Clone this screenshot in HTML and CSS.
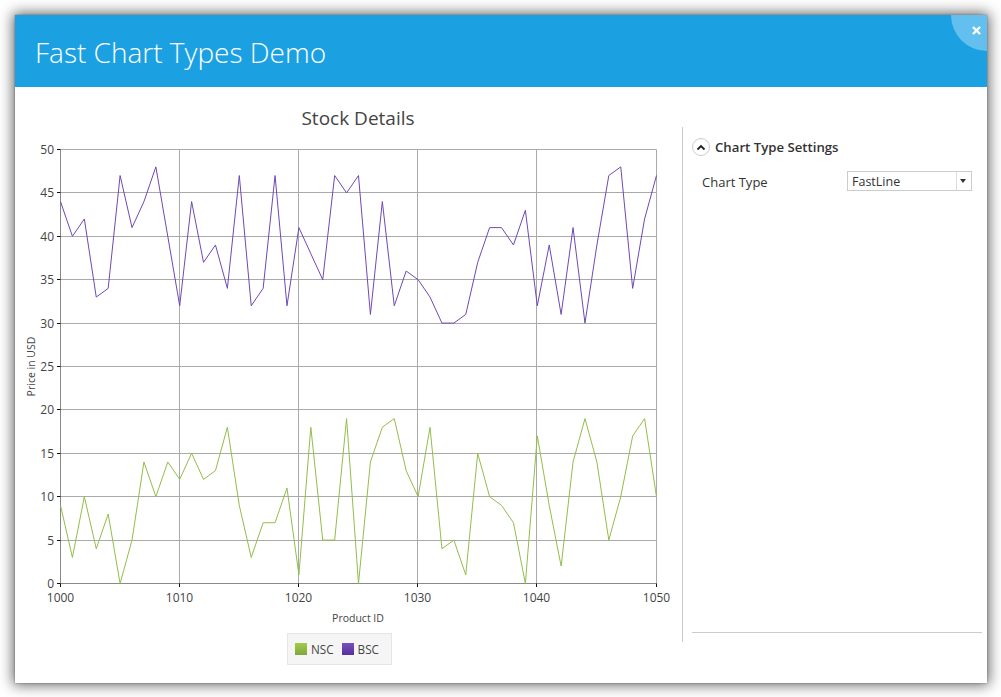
FILE: index.html

```html
<!DOCTYPE html>
<html lang="en">
<head>
  <meta charset="UTF-8" />
  <title>Fast Chart Types Demo</title>
  <link rel="stylesheet" href="styles.css">
</head>
<body>
  <div class="window">
    <header class="title-bar">
      <h1>Fast Chart Types Demo</h1>
      <button class="close-btn" type="button">
        <svg width="9" height="9" viewBox="0 0 9 9"><path d="M1 1L8 8M8 1L1 8" /></svg>
      </button>
    </header>

    <div class="content">
      <section class="chart-col">
        <h2 class="chart-title">Stock Details</h2>

        <!-- viewBox uses window coordinates: x = 60.5 + 11.92 * n, y = 583.5 - 8.68 * value -->
        <svg class="chart" width="667" height="492" viewBox="15 135 667 492">
          <g class="grid">
            <path d="M60.5 149.5H656.5M60.5 192.5H656.5M60.5 236.5H656.5M60.5 279.5H656.5M60.5 323.5H656.5M60.5 366.5H656.5M60.5 409.5H656.5M60.5 453.5H656.5M60.5 496.5H656.5M60.5 540.5H656.5" />
            <path d="M179.5 149.5V583.5M298.5 149.5V583.5M417.5 149.5V583.5M536.5 149.5V583.5M656.5 149.5V583.5" />
          </g>
          <path class="axis" d="M60.5 149.5V583.5H656.5" />
          <path class="ticks" d="M57 149.5H60.5M57 192.5H60.5M57 236.5H60.5M57 279.5H60.5M57 323.5H60.5M57 366.5H60.5M57 409.5H60.5M57 453.5H60.5M57 496.5H60.5M57 540.5H60.5M57 583.5H60.5M60.5 583.5V587M179.5 583.5V587M298.5 583.5V587M417.5 583.5V587M536.5 583.5V587M656.5 583.5V587" />

          <g transform="translate(60.5 583.5) scale(11.92 -8.68)">
            <polyline class="line line-bsc" points="0,44 1,40 2,42 3,33 4,34 5,47 6,41 7,44 8,48 9,40 10,32 11,44 12,37 13,39 14,34 15,47 16,32 17,34 18,47 19,32 20,41 21,38 22,35 23,47 24,45 25,47 26,31 27,44 28,32 29,36 30,35 31,33 32,30 33,30 34,31 35,37 36,41 37,41 38,39 39,43 40,32 41,39 42,31 43,41 44,30 45,39 46,47 47,48 48,34 49,42 50,47" />
            <polyline class="line line-nsc" points="0,9 1,3 2,10 3,4 4,8 5,0 6,5 7,14 8,10 9,14 10,12 11,15 12,12 13,13 14,18 15,9 16,3 17,7 18,7 19,11 20,1 21,18 22,5 23,5 24,19 25,0 26,14 27,18 28,19 29,13 30,10 31,18 32,4 33,5 34,1 35,15 36,10 37,9 38,7 39,0 40,17 41,9 42,2 43,14 44,19 45,14 46,5 47,10 48,17 49,19 50,10" />
          </g>

          <g class="y-labels">
            <text x="54" y="154">50</text>
            <text x="54" y="197">45</text>
            <text x="54" y="241">40</text>
            <text x="54" y="284">35</text>
            <text x="54" y="328">30</text>
            <text x="54" y="371">25</text>
            <text x="54" y="414">20</text>
            <text x="54" y="458">15</text>
            <text x="54" y="501">10</text>
            <text x="54" y="545">5</text>
            <text x="54" y="588">0</text>
          </g>
          <g class="x-labels">
            <text x="60.5" y="602">1000</text>
            <text x="179.5" y="602">1010</text>
            <text x="298.5" y="602">1020</text>
            <text x="417.5" y="602">1030</text>
            <text x="536.5" y="602">1040</text>
            <text x="656.5" y="602">1050</text>
          </g>
          <text class="axis-title" x="358" y="622">Product ID</text>
          <text class="axis-title" transform="translate(35 366.5) rotate(-90)">Price in USD</text>
        </svg>

        <div class="legend">
          <span class="legend-item"><i class="swatch swatch-nsc"></i>NSC</span>
          <span class="legend-item"><i class="swatch swatch-bsc"></i>BSC</span>
        </div>
      </section>

      <aside class="settings">
        <div class="settings-head">
          <span class="collapse-icon">
            <svg width="10" height="7" viewBox="0 0 10 7"><path d="M1.5 5.5L5 2l3.5 3.5" /></svg>
          </span>
          <span class="settings-title">Chart Type Settings</span>
        </div>
        <div class="field">
          <label>Chart Type</label>
          <div class="combo">
            <span class="combo-value">FastLine</span>
            <span class="combo-arrow"></span>
          </div>
        </div>
        <div class="settings-foot"></div>
      </aside>
    </div>
  </div>
</body>
</html>
```

FILE: styles.css

```css
html, body {
  margin: 0;
  height: 100%;
}
body {
  font-family: "Open Sans", "Noto Sans", sans-serif;
  background-color: #fff;
  color: #333;
  padding: 15px 14px 14px 15px;
  box-sizing: border-box;
  overflow: hidden;
}
.window {
  width: 972px;
  height: 668px;
  background: #fff;
  box-shadow: 0 0 2px rgba(0,0,0,0.35), 0 0 13px 2px rgba(0,0,0,0.6);
  display: flex;
  flex-direction: column;
}
.title-bar {
  height: 72px;
  background: #1ba1e2;
  position: relative;
  overflow: hidden;
  display: flex;
  align-items: center;
  padding: 2px 0 0 20px;
  box-sizing: border-box;
}
.title-bar h1 {
  margin: 0;
  color: #fff;
  font-size: 28px;
  font-weight: 300;
}
.close-btn {
  position: absolute;
  top: -36px;
  right: -36px;
  width: 72px;
  height: 72px;
  border: 0;
  padding: 47px 0 0 21px;
  border-radius: 50%;
  background: #62bfee;
  text-align: left;
  box-sizing: border-box;
  display: flex;
  align-items: flex-start;
}
.close-btn svg {
  display: block;
}
.close-btn path {
  fill: none;
  stroke: #fff;
  stroke-width: 2.4;
}
.content {
  flex: 1;
  display: flex;
  min-height: 0;
}
.chart-col {
  width: 667px;
  display: flex;
  flex-direction: column;
}
.chart-title {
  margin: 18px 0 0;
  padding-left: 19px;
  height: 30px;
  line-height: 26px;
  text-align: center;
  font-size: 19px;
  font-weight: 400;
  color: #444;
}
.chart {
  display: block;
}
.grid path {
  fill: none;
  stroke: #aaa;
  stroke-width: 1;
}
.axis {
  fill: none;
  stroke: #888;
  stroke-width: 1;
}
.ticks {
  fill: none;
  stroke: #111;
  stroke-width: 1;
}
.line {
  fill: none;
  stroke-width: 1;
  vector-effect: non-scaling-stroke;
}
.line-bsc {
  stroke: #7048b4;
}
.line-nsc {
  stroke: #93bd4a;
}
.y-labels text {
  font-size: 12px;
  fill: #444;
  text-anchor: end;
}
.x-labels text {
  font-size: 12px;
  fill: #444;
  text-anchor: middle;
}
.axis-title {
  font-size: 10.5px;
  fill: #444;
  text-anchor: middle;
}
.legend {
  align-self: flex-start;
  margin: 6px 0 0 272px;
  width: 105px;
  height: 32px;
  box-sizing: border-box;
  background: #f5f5f5;
  border: 1px solid #e6e6e6;
  display: flex;
  align-items: center;
  gap: 8px;
  padding-left: 7px;
  font-size: 11.7px;
  color: #444;
}
.legend-item {
  display: flex;
  align-items: center;
  gap: 4px;
}
.swatch {
  display: block;
  width: 12px;
  height: 12px;
}
.swatch-nsc {
  background: linear-gradient(#a3cc4c, #7fa63d);
}
.swatch-bsc {
  background: linear-gradient(#7a4fbb, #55309c);
}
.settings {
  margin-top: 40px;
  height: 515px;
  width: 300px;
  box-sizing: border-box;
  border-left: 1px solid #ccc;
  padding: 10px 0 0 9px;
  display: flex;
  flex-direction: column;
}
.settings-head {
  display: flex;
  align-items: center;
  gap: 5px;
  height: 20px;
}
.collapse-icon {
  width: 18px;
  height: 18px;
  box-sizing: border-box;
  border: 1px solid #ccc;
  border-radius: 50%;
  display: flex;
  align-items: center;
  justify-content: center;
}
.collapse-icon path {
  fill: none;
  stroke: #222;
  stroke-width: 1.8;
}
.settings-title {
  font-size: 13.2px;
  font-weight: 600;
  color: #333;
}
.field {
  display: flex;
  align-items: center;
  justify-content: space-between;
  margin-top: 14px;
  padding: 0 10px;
  height: 20px;
  font-size: 13px;
}
.field label {
  padding-top: 2px;
}
.combo {
  width: 125px;
  height: 20px;
  box-sizing: border-box;
  border: 1px solid #ccc;
  display: flex;
  align-items: center;
  font-size: 12.5px;
}
.combo-value {
  flex: 1;
  padding-left: 4px;
}
.combo-arrow {
  width: 15px;
  height: 18px;
  box-sizing: border-box;
  border-left: 1px solid #ddd;
  position: relative;
}
.combo-arrow::after {
  content: "";
  position: absolute;
  left: 3px;
  top: 7px;
  border-left: 3.5px solid transparent;
  border-right: 3.5px solid transparent;
  border-top: 4px solid #333;
}
.settings-foot {
  margin-top: auto;
  margin-bottom: 9px;
  border-top: 1px solid #ccc;
}
```
